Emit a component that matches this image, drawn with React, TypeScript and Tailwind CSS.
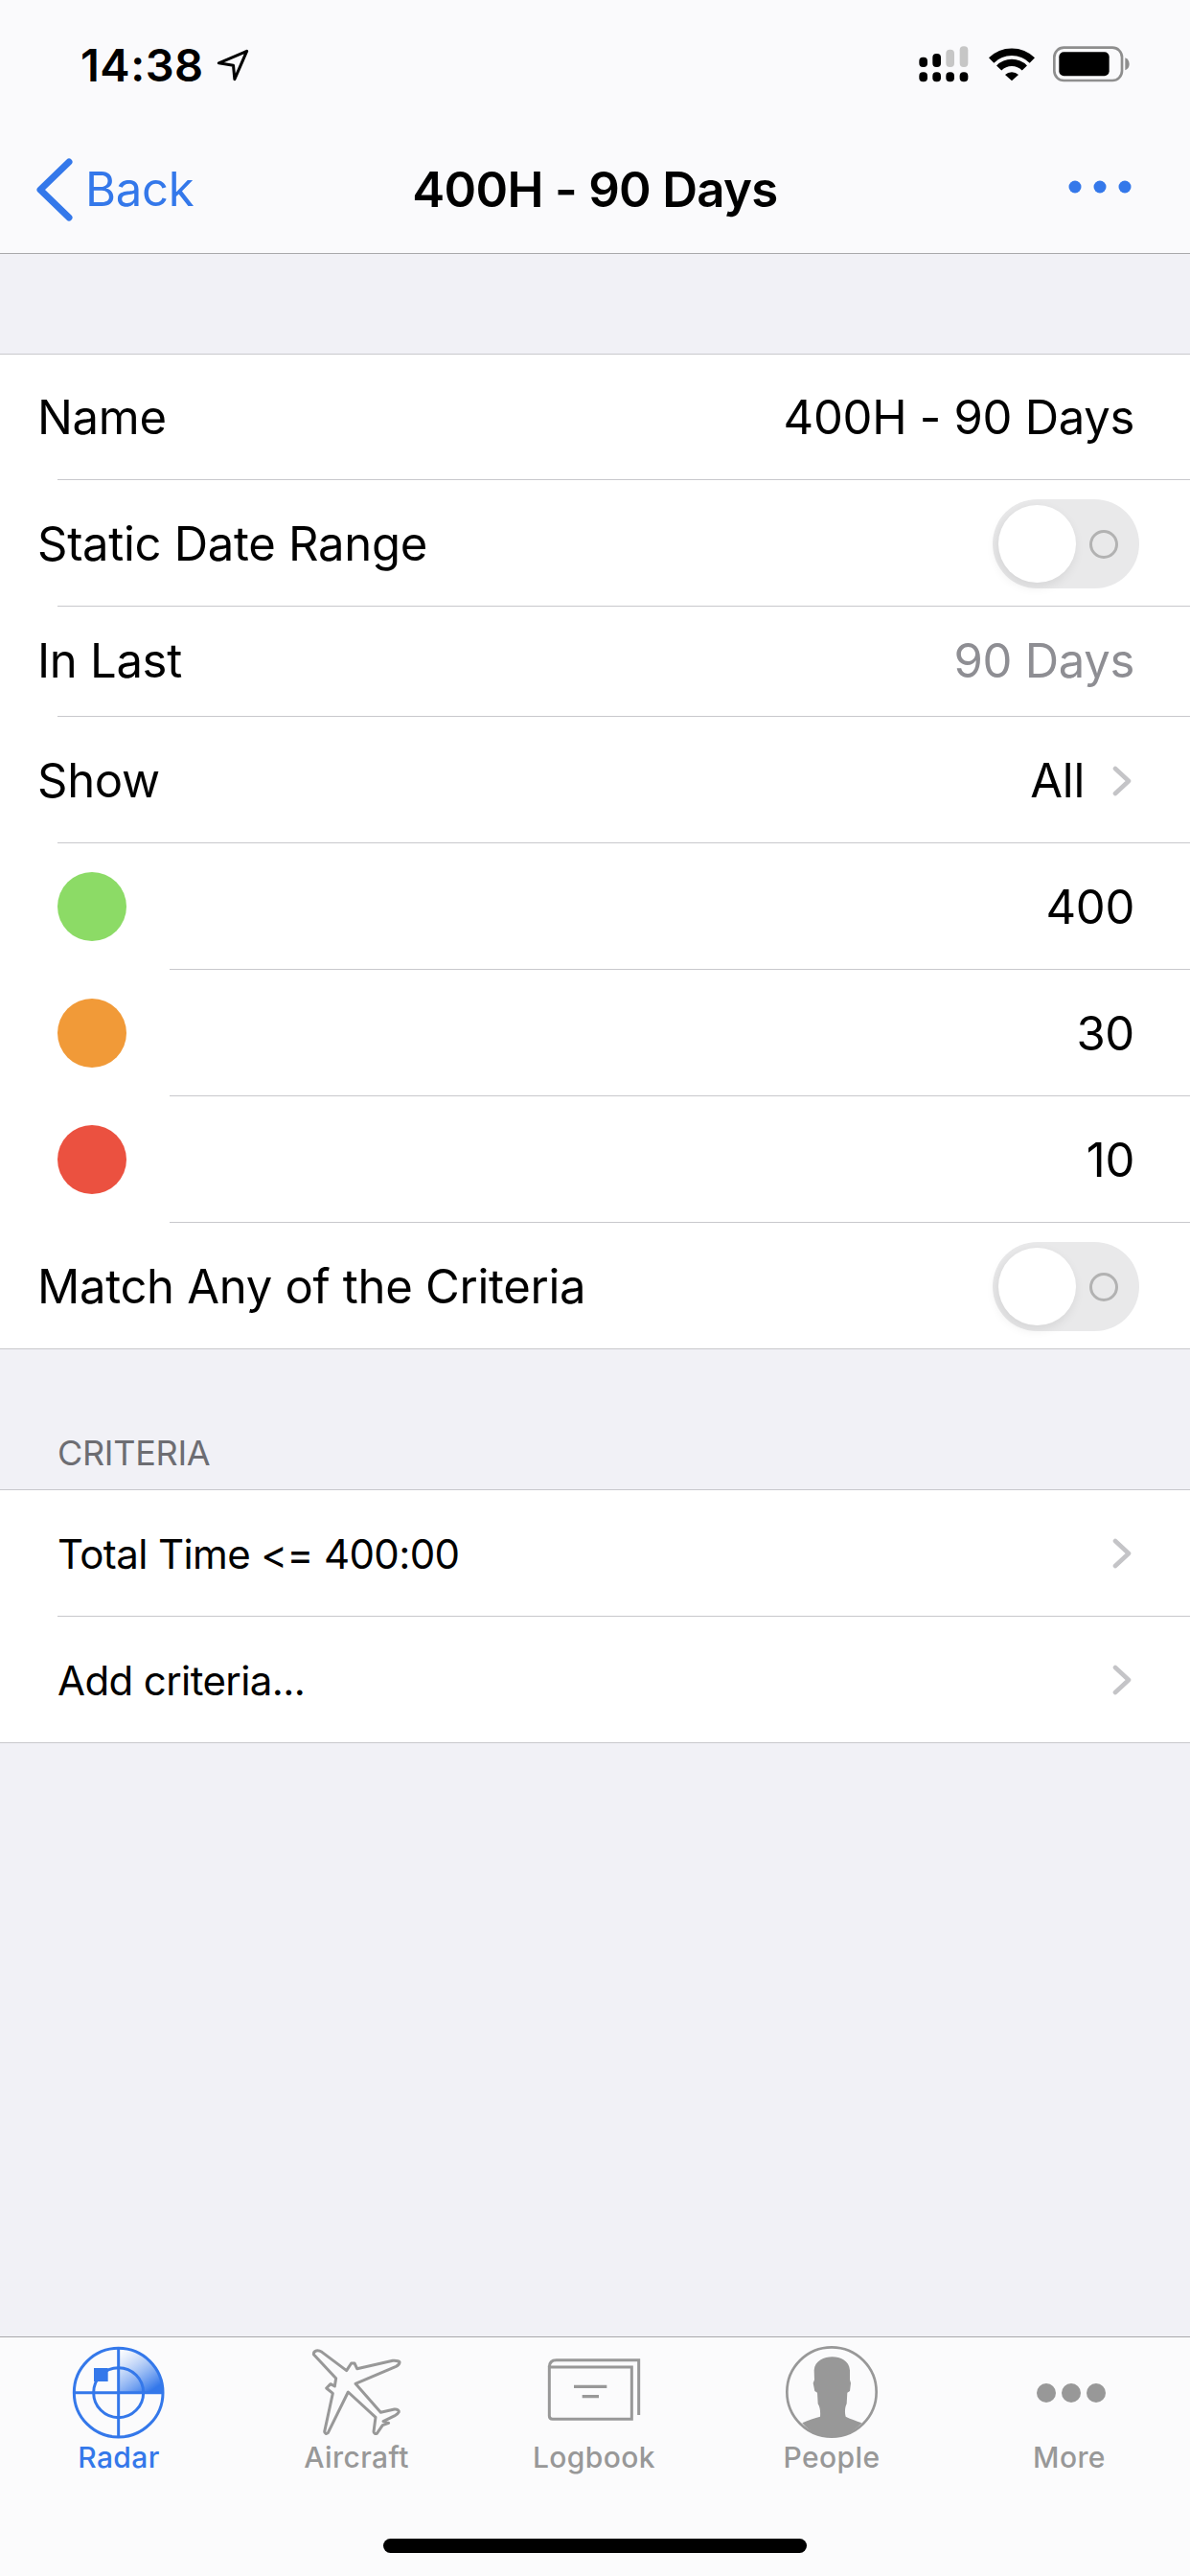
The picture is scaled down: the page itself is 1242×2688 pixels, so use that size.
const BLUE = "#3478ea";
const GREY = "#989898";

function Separator({ inset = 60 }: { inset?: 0 | 60 | 177 }) {
  const margin = inset === 177 ? "ml-[177px]" : inset === 60 ? "ml-[60px]" : "";
  return (
    <div className="bg-white">
      <div className={`h-px bg-[#c8c8cc] ${margin}`} />
    </div>
  );
}

function Chevron() {
  return (
    <svg width="20" height="32" viewBox="0 0 20 32" fill="none" className="shrink-0">
      <path d="M3 3l14 13L3 29" stroke="#c4c4c7" strokeWidth="4.6" strokeLinecap="round" strokeLinejoin="round" />
    </svg>
  );
}

function Toggle() {
  return (
    <div className="flex h-[93px] w-[153px] items-center rounded-full bg-[#e9e9ea] pl-[6px]">
      <div className="h-[81px] w-[81px] rounded-full bg-white shadow-[-2px_4px_12px_rgba(0,0,0,0.09)]" />
      <div className="ml-[14px] h-[30px] w-[30px] rounded-full border-[3px] border-[#b2b2b2]" />
    </div>
  );
}

function Row({ label, height, children }: { label?: string; height: string; children?: React.ReactNode }) {
  return (
    <div className={`flex items-center justify-between bg-white pl-[39px] pr-[58px] ${height}`}>
      <span className="text-black">{label}</span>
      {children}
    </div>
  );
}

function ColorRow({ color, value }: { color: string; value: string }) {
  return (
    <div className="flex h-[131px] items-center justify-between bg-white pl-[60px] pr-[58px]">
      <div className={`h-[72px] w-[72px] rounded-full ${color}`} />
      <span className="pt-[2px] text-black">{value}</span>
    </div>
  );
}

function LinkRow({ label }: { label: string }) {
  return (
    <div className="flex h-[131px] items-center justify-between bg-white pl-[60px] pr-[61px]">
      <span className="pt-[2px] text-[42px] tracking-[-0.6px] text-black">{label}</span>
      <Chevron />
    </div>
  );
}

function StatusIcons() {
  return (
    <div className="flex items-center">
      <svg width="52" height="38" viewBox="176 146 156 114" fill="#000">
        <rect x="177" y="181" width="26" height="31" rx="12" />
        <rect x="219" y="170" width="26" height="42" rx="12" />
        <rect x="261" y="157" width="26" height="55" rx="12" fill="#c6c6c6" />
        <rect x="304" y="147" width="26" height="65" rx="12" fill="#c6c6c6" />
        <rect x="177" y="228" width="26" height="30" rx="12" />
        <rect x="219" y="228" width="26" height="30" rx="12" />
        <rect x="261" y="228" width="26" height="30" rx="12" />
        <rect x="304" y="228" width="26" height="30" rx="12" />
      </svg>
      <svg width="48" height="38" viewBox="394 146 144 114" fill="none" className="ml-[21px]">
        <path d="M402 191A91 91 0 0 1 530 191" stroke="#000" strokeWidth="23" />
        <path d="M426 215A56 56 0 0 1 506 215" stroke="#000" strokeWidth="22" />
        <path d="M466 255L445 236A30 30 0 0 1 487 236Z" fill="#000" />
      </svg>
      <svg width="80" height="38" viewBox="596 146 240 114" fill="none" className="ml-[19px]">
        <rect x="600" y="151" width="212" height="103" rx="30" stroke="#8e8e8e" strokeWidth="8" />
        <rect x="615" y="165" width="157" height="75" rx="15" fill="#000" />
        <path d="M822 183C830 186 835 194 835 203C835 212 830 219 822 222Z" fill="#8e8e8e" />
      </svg>
    </div>
  );
}

function RadarIcon() {
  return (
    <svg width="130" height="100" viewBox="-4 15 390 300" fill="none">
      <defs>
        <linearGradient id="sweep" x1="0.1" y1="0" x2="0.75" y2="0.95">
          <stop offset="0" stopColor="#ffffff" stopOpacity="0.6" />
          <stop offset="1" stopColor={BLUE} />
        </linearGradient>
      </defs>
      <path d="M190 170V31A139 139 0 0 1 329 170Z" fill="url(#sweep)" />
      <g stroke={BLUE} strokeWidth="9">
        <circle cx="190" cy="170" r="139" />
        <circle cx="190" cy="170" r="78" />
        <path d="M190 30V310M50 170H330" />
      </g>
      <rect x="113" y="93" width="44" height="42" fill={BLUE} />
    </svg>
  );
}

function PlaneIcon() {
  return (
    <svg width="130" height="100" viewBox="-9 15 390 300" fill="none">
      <path
        d="M52 50C52 38 65 35 78 43L155 101L170 78L180 78L188 95L300 70C312 69 322 72 321 76C320 81 316 85 310 88L183 142L262 232L305 222C314 221 320 226 319 230C316 235 313 238 308 241L270 260L287 265L268 272L250 298C245 300 240 297 240 292L246 247L160 168L97 296C92 300 86 298 86 292L112 172L92 156L105 143L118 150L122 125Z"
        stroke={GREY}
        strokeWidth="9"
        strokeLinejoin="round"
      />
    </svg>
  );
}

function LogbookIcon() {
  return (
    <svg width="130" height="100" viewBox="-15 15 390 300" fill="none">
      <g stroke={GREY} strokeWidth="9">
        <path d="M40 90V243Q40 253 50 253H298V90Z" />
        <path d="M40 90Q40 68 62 68H320V240" />
      </g>
      <path d="M117 151H220M143 182H195" stroke={GREY} strokeWidth="10" />
    </svg>
  );
}

function PeopleIcon() {
  return (
    <svg width="130" height="100" viewBox="-7 15 390 300" fill="none">
      <circle cx="188" cy="168" r="140" stroke={GREY} strokeWidth="8" />
      <path
        d="M133 100C135 70 165 58 190 58C215 58 243 70 245 100L245 130L248 140L245 165L237 170L235 205C230 215 228 230 232 245C245 252 265 258 282 265C250 300 215 310 188 310C155 310 120 295 96 265C115 255 135 250 152 245C153 230 152 215 145 205L143 170L135 165L130 140L134 130Z"
        fill={GREY}
      />
    </svg>
  );
}

function MoreIcon() {
  return (
    <svg width="130" height="100" viewBox="-2 0 130 100" fill={GREY}>
      <circle cx="39" cy="52" r="10" />
      <circle cx="65" cy="52" r="10" />
      <circle cx="91" cy="52" r="10" />
    </svg>
  );
}

function Tab({ label, active, children }: { label: string; active?: boolean; children: React.ReactNode }) {
  return (
    <div className="flex flex-1 flex-col items-center">
      {children}
      <span className={`text-[30px] font-medium leading-[38px] tracking-[0.4px] ${active ? "text-[#3478ea]" : "text-[#989898]"}`}>{label}</span>
    </div>
  );
}

export default function App() {
  return (
    <div className="flex h-[2688px] w-[1242px] flex-col bg-[#f1f1f6] font-[Inter,sans-serif] text-[49px] tracking-[-0.3px]">
      {/* Status + nav */}
      <header className="border-b border-[#a9a9ab] bg-[#fafafc]">
        <div className="flex h-[118px] items-center justify-between pl-[84px] pr-[63px] pt-[16px]">
          <div className="flex items-center gap-[11px]">
            <span className="text-[47px] font-semibold leading-none tracking-[0.5px] text-black">14:38</span>
            <svg width="37" height="37" viewBox="490 55 110 110" fill="none">
              <path d="M590 68L503 105L548 112L552 155Z" stroke="#000" strokeWidth="9" strokeLinejoin="round" />
            </svg>
          </div>
          <StatusIcons />
        </div>
        <div className="grid h-[146px] grid-cols-[1fr_auto_1fr] items-center pl-[38px] pr-[38px] pt-[14px]">
          <div className="flex items-center gap-[13px] text-[#3478ea]">
            <svg width="38" height="66" viewBox="0 0 38 66" fill="none">
              <path d="M34 4L4 33L34 62" stroke="#3478ea" strokeWidth="7" strokeLinecap="round" strokeLinejoin="round" />
            </svg>
            <span>Back</span>
          </div>
          <span className="text-[51px] font-semibold tracking-[-0.7px] text-black">400H - 90 Days</span>
          <svg width="66" height="14" viewBox="0 0 66 14" fill="#3478ea" className="mb-[6px] mr-[23px] justify-self-end">
            <circle cx="7" cy="7" r="6.5" />
            <circle cx="33" cy="7" r="6.5" />
            <circle cx="59" cy="7" r="6.5" />
          </svg>
        </div>
      </header>

      <main className="flex-1">
        <div className="mt-[104px]">
          <Separator inset={0} />
          <Row label="Name" height="h-[130px] pt-[2px]">
            <span className="text-black">400H - 90 Days</span>
          </Row>
          <Separator />
          <div className="flex h-[131px] items-center justify-between bg-white pl-[39px] pr-[53px] pt-[2px]">
            <span className="text-black">Static Date Range</span>
            <Toggle />
          </div>
          <Separator />
          <Row label="In Last" height="h-[114px]">
            <span className="text-[#8e8e93]">90 Days</span>
          </Row>
          <Separator />
          <div className="flex h-[131px] items-center justify-between bg-white pl-[39px] pr-[61px] pt-[2px]">
            <span className="text-black">Show</span>
            <div className="flex items-center gap-[29px]">
              <span className="text-black">All</span>
              <Chevron />
            </div>
          </div>
          <Separator />
          <ColorRow color="bg-[#8cdb66]" value="400" />
          <Separator inset={177} />
          <ColorRow color="bg-[#f19a38]" value="30" />
          <Separator inset={177} />
          <ColorRow color="bg-[#eb5140]" value="10" />
          <Separator inset={177} />
          <div className="flex h-[131px] items-center justify-between bg-white pl-[39px] pr-[53px] pt-[2px]">
            <span className="text-black">Match Any of the Criteria</span>
            <Toggle />
          </div>
          <Separator inset={0} />
        </div>

        <div className="flex h-[146px] items-end pb-[16px] pl-[60px] text-[36px] leading-[44px] tracking-[-0.3px] text-[#6d6d72]">
          CRITERIA
        </div>
        <Separator inset={0} />
        <LinkRow label="Total Time <= 400:00" />
        <Separator />
        <LinkRow label="Add criteria..." />
        <Separator inset={0} />
      </main>

      {/* Tab bar */}
      <footer className="border-t border-[#a9a9ab] bg-[#fbfbfc] pt-[6px] tracking-normal">
        <div className="flex pr-[2px]">
          <Tab label="Radar" active>
            <RadarIcon />
          </Tab>
          <Tab label="Aircraft">
            <PlaneIcon />
          </Tab>
          <Tab label="Logbook">
            <LogbookIcon />
          </Tab>
          <Tab label="People">
            <PeopleIcon />
          </Tab>
          <Tab label="More">
            <MoreIcon />
          </Tab>
        </div>
        <div className="mx-auto mb-[24px] mt-[66px] h-[15px] w-[442px] rounded-full bg-black" />
      </footer>
    </div>
  );
}
